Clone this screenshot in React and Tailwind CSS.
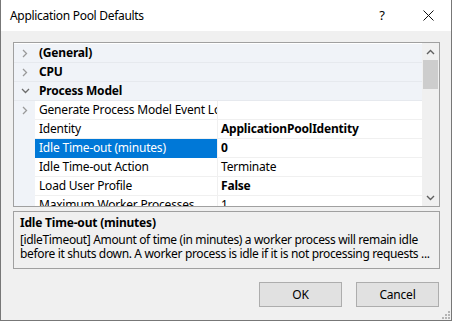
import React from "react";

const font = { fontFamily: '"Noto Sans", "Open Sans", sans-serif' };

function Chevron({ down }) {
  return down ? (
    <svg width="9" height="6" viewBox="0 0 9 6" className="block">
      <path d="M1 1 L4.5 4.5 L8 1" fill="none" stroke="#6d6d6d" strokeWidth="1.3" />
    </svg>
  ) : (
    <svg width="6" height="9" viewBox="0 0 6 9" className="block">
      <path d="M1 1 L4.5 4.5 L1 8" fill="none" stroke="#9a9a9a" strokeWidth="1.3" />
    </svg>
  );
}

function CategoryRow({ label, open }) {
  return (
    <div className="flex h-[19px] items-center bg-[#f0f3f8] border-b border-[#e6e9ee]">
      <div className="w-[21px] flex justify-center pl-[1px]">
        <Chevron down={open} />
      </div>
      <div className="pl-[4px] font-bold text-[12px] text-black">{label}</div>
    </div>
  );
}

function PropRow({ name, value, bold, selected, expander }) {
  return (
    <div className="flex h-[19px]">
      <div className="w-[21px] bg-[#f0f3f8] flex items-center justify-center pl-[1px]">
        {expander && <Chevron />}
      </div>
      <div
        className={
          "w-[182px] flex items-center pl-[4px] overflow-hidden whitespace-nowrap text-[12px] border-b " +
          (selected ? "bg-[#0078d7] text-white border-[#0078d7]" : "text-black border-[#f0f0f0]")
        }
      >
        {name}
      </div>
      <div className="w-[1px] bg-[#f0f0f0]" />
      <div
        className={
          "flex-1 flex items-center pl-[3px] whitespace-nowrap text-[12px] text-black border-b border-[#f0f0f0] " +
          (bold ? "font-bold" : "")
        }
      >
        {value}
      </div>
    </div>
  );
}

export default function App() {
  return (
    <div
      style={font}
      className="w-[452px] h-[321px] bg-[#f0f0f0] border-x border-b border-[#777777] flex flex-col overflow-hidden tracking-[-0.2px]"
    >
      {/* title bar */}
      <div className="h-[31px] bg-white flex items-center shrink-0">
        <div className="pl-[9px] text-[12px] text-black flex-1 tracking-[-0.3px]">Application Pool Defaults</div>
        <div className="w-[20px] text-[13px] text-black text-center mr-[26px]">?</div>
        <div className="w-[20px] flex justify-center mr-[13px]">
          <svg width="11" height="11" viewBox="0 0 11 11">
            <path d="M0.5 0.5 L10.5 10.5 M10.5 0.5 L0.5 10.5" stroke="#111" strokeWidth="1" />
          </svg>
        </div>
      </div>

      <div className="flex flex-col pl-[12px] pr-[11px] pt-[11px]">
        {/* property grid */}
        <div className="h-[165px] border border-[#a0a0a0] bg-white flex">
          <div className="flex-1 overflow-hidden pt-[1px]">
            <CategoryRow label="(General)" />
            <CategoryRow label="CPU" />
            <CategoryRow label="Process Model" open />
            <PropRow name="Generate Process Model Event Log" value="" expander />
            <PropRow name="Identity" value="ApplicationPoolIdentity" bold />
            <PropRow name="Idle Time-out (minutes)" value="0" bold selected />
            <PropRow name="Idle Time-out Action" value="Terminate" />
            <PropRow name="Load User Profile" value="False" bold />
            <PropRow name="Maximum Worker Processes" value="1" />
          </div>
          <div className="w-[17px] bg-[#f0f0f0] flex flex-col">
            <div className="h-[17px] flex items-center justify-center">
              <svg width="9" height="6" viewBox="0 0 9 6">
                <path d="M1 5 L4.5 1.5 L8 5" fill="none" stroke="#606060" strokeWidth="1.4" />
              </svg>
            </div>
            <div className="mx-[1px] h-[29px] bg-[#cdcdcd]" />
            <div className="flex-1" />
            <div className="h-[17px] flex items-center justify-center">
              <svg width="9" height="6" viewBox="0 0 9 6">
                <path d="M1 1 L4.5 4.5 L8 1" fill="none" stroke="#606060" strokeWidth="1.4" />
              </svg>
            </div>
          </div>
        </div>

        {/* description */}
        <div className="mt-[4px] h-[58px] border border-[#a0a0a0] bg-[#f0f0f0] pl-[6px] pt-[2px] text-[12px] text-black leading-[14px] overflow-hidden tracking-[-0.35px]">
          <div className="font-bold h-[18px] flex items-center tracking-[-0.2px]">Idle Time-out (minutes)</div>
          <div className="whitespace-nowrap mt-[1px]">
            [idleTimeout] Amount of time (in minutes) a worker process will remain idle
          </div>
          <div className="whitespace-nowrap">
            before it shuts down. A worker process is idle if it is not processing requests ...
          </div>
        </div>

        {/* buttons */}
        <div className="mt-[13px] flex justify-end gap-[14px] pr-[1px]">
          <button className="w-[83px] h-[25px] bg-[#e1e1e1] border border-[#adadad] text-[12px] text-black">
            OK
          </button>
          <button className="w-[83px] h-[25px] bg-[#e1e1e1] border border-[#adadad] text-[12px] text-black">
            Cancel
          </button>
        </div>
      </div>
      <div className="flex-1 flex justify-end items-end pr-[1px] pb-[1px]">
        <svg width="10" height="10" viewBox="0 0 10 10">
          <g fill="#b5b5b5">
            <rect x="8" y="2" width="2" height="2" />
            <rect x="5" y="5" width="2" height="2" />
            <rect x="8" y="5" width="2" height="2" />
            <rect x="2" y="8" width="2" height="2" />
            <rect x="5" y="8" width="2" height="2" />
            <rect x="8" y="8" width="2" height="2" />
          </g>
        </svg>
      </div>
    </div>
  );
}
